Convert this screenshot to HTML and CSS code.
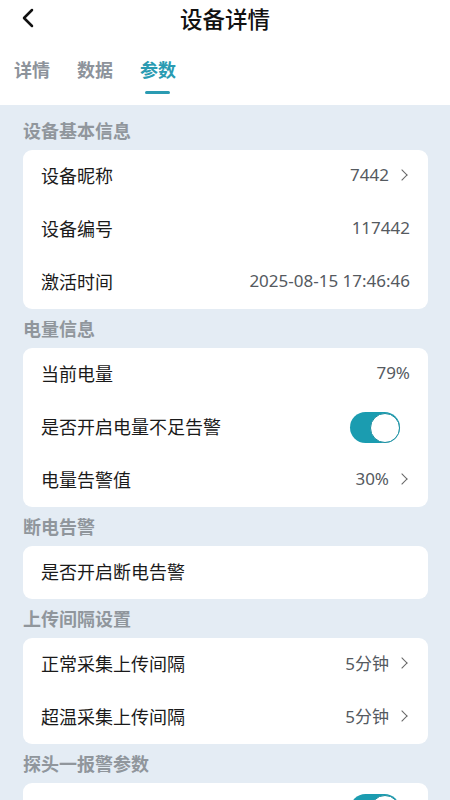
FILE: index.html
```html
<!DOCTYPE html>
<html lang="zh-CN">
<head>
    <meta charset="UTF-8">
    <meta name="viewport" content="width=device-width, initial-scale=1.0">
    <title>设备详情</title>
    <link rel="stylesheet" href="styles.css">
</head>
<body>

    <div class="header">
        <div class="top-bar">
            <span class="back">
                <svg width="14" height="20" viewBox="0 0 14 20">
                    <path d="M11 2 L3 10 L11 18" fill="none" stroke="#111" stroke-width="2.5" stroke-linecap="round" stroke-linejoin="round"/>
                </svg>
            </span>
            <h1>设备详情</h1>
        </div>
        <div class="tabs">
            <span class="tab">详情</span>
            <span class="tab">数据</span>
            <span class="tab active">参数</span>
        </div>
    </div>

    <div class="content">
        <div class="section-title">设备基本信息</div>
        <div class="card">
            <div class="row">
                <span class="label">设备昵称</span>
                <span class="value">7442<i class="arrow"></i></span>
            </div>
            <div class="row">
                <span class="label">设备编号</span>
                <span class="value">117442</span>
            </div>
            <div class="row">
                <span class="label">激活时间</span>
                <span class="value">2025-08-15 17:46:46</span>
            </div>
        </div>

        <div class="section-title">电量信息</div>
        <div class="card">
            <div class="row">
                <span class="label">当前电量</span>
                <span class="value">79%</span>
            </div>
            <div class="row">
                <span class="label">是否开启电量不足告警</span>
                <span class="switch on"><span class="knob"></span></span>
            </div>
            <div class="row">
                <span class="label">电量告警值</span>
                <span class="value">30%<i class="arrow"></i></span>
            </div>
        </div>

        <div class="section-title">断电告警</div>
        <div class="card">
            <div class="row">
                <span class="label">是否开启断电告警</span>
            </div>
        </div>

        <div class="section-title">上传间隔设置</div>
        <div class="card">
            <div class="row">
                <span class="label">正常采集上传间隔</span>
                <span class="value">5分钟<i class="arrow"></i></span>
            </div>
            <div class="row">
                <span class="label">超温采集上传间隔</span>
                <span class="value">5分钟<i class="arrow"></i></span>
            </div>
        </div>

        <div class="section-title">探头一报警参数</div>
        <div class="card">
            <div class="row">
                <span class="label"></span>
                <span class="switch on"><span class="knob"></span></span>
            </div>
        </div>
    </div>

</body>
</html>
```

FILE: styles.css
```css
body {
    margin: 0;
    background-color: #e4ecf4;
    font-family: "Noto Sans", "Noto Sans CJK SC", sans-serif;
    color: #1a1a1a;
}

.header {
    background-color: #fff;
}

.top-bar {
    height: 38px;
    box-sizing: border-box;
    padding-bottom: 3px;
    display: flex;
    align-items: center;
    justify-content: center;
    position: relative;
}

.top-bar h1 {
    margin: 0;
    font-family: "Noto Sans CJK SC", sans-serif;
    font-size: 22.5px;
    font-weight: 500;
    color: #111;
}

.back {
    position: absolute;
    left: 21px;
    top: 8px;
}

.tabs {
    height: 67px;
    display: flex;
    gap: 27px;
    padding-left: 14px;
}

.tab {
    font-family: "Noto Sans CJK SC", sans-serif;
    font-size: 18px;
    font-weight: bold;
    color: #8d939b;
    padding-top: 18px;
    position: relative;
}

.tab.active {
    color: #2a9bb2;
}

.tab.active::after {
    content: "";
    position: absolute;
    left: 5px;
    right: 6px;
    top: 53px;
    height: 3px;
    border-radius: 2px;
    background-color: #2a9bb2;
}

.content {
    padding: 6px 22px 0 23px;
}

.section-title {
    height: 39px;
    line-height: 39px;
    font-family: "Noto Sans CJK SC", sans-serif;
    font-size: 18px;
    font-weight: bold;
    color: #90969c;
}

.card {
    background-color: #fff;
    border-radius: 9px;
}

.row {
    height: 53px;
    box-sizing: border-box;
    padding: 0 18px 4px;
    display: flex;
    align-items: center;
    justify-content: space-between;
}

.label {
    font-family: "Noto Sans CJK SC", sans-serif;
    font-size: 18px;
    color: #1a1a1a;
    line-height: 24px;
}

.value {
    font-size: 17px;
    color: #555a5f;
    display: flex;
    align-items: center;
}

.arrow {
    display: inline-block;
    width: 7px;
    height: 7px;
    border-top: 1.5px solid #666;
    border-right: 1.5px solid #666;
    transform: rotate(45deg);
    margin-left: 9px;
    margin-right: 4px;
}

.switch {
    width: 50px;
    height: 31px;
    border-radius: 16px;
    background-color: #1b9cb0;
    display: flex;
    align-items: center;
    justify-content: flex-end;
    margin-right: 10px;
    margin-top: 4px;
}

.knob {
    width: 28px;
    height: 28px;
    border-radius: 50%;
    background-color: #fff;
    border: 1px solid #1b8ea0;
}
```
